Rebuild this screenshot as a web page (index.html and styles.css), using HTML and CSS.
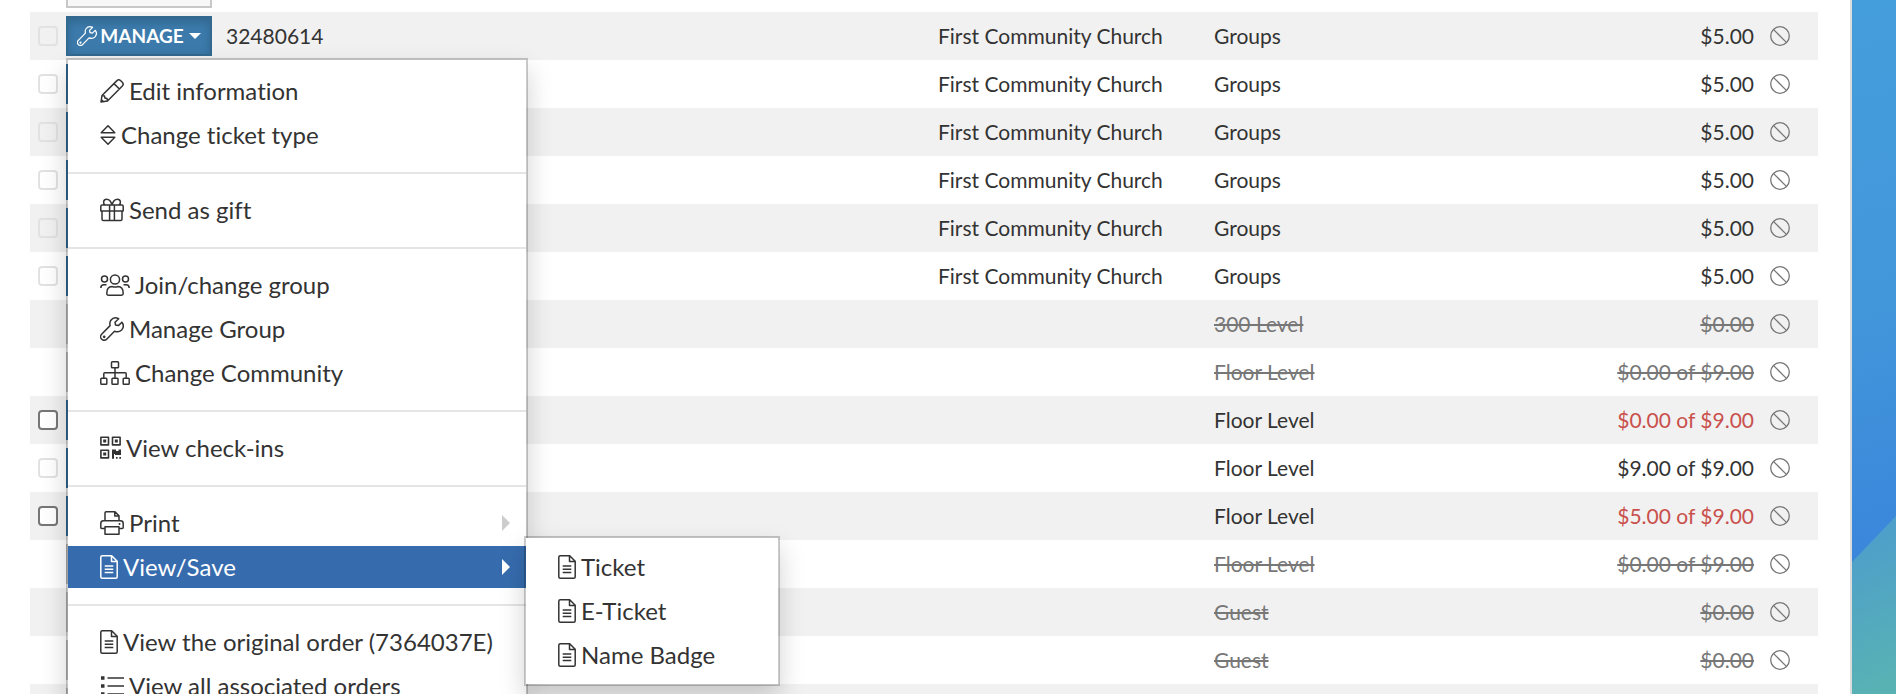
FILE: index.html
```
<!DOCTYPE html>
<html lang="en">
<head>
<meta charset="utf-8">
<title>Tickets</title>
<link rel="stylesheet" href="styles.css">
</head>
<body>
<svg class="sprite" aria-hidden="true">
  <symbol id="i-wrench" viewBox="0 0 24 24"><path d="M21.900 5.200 18.400 8.600 15.600 8 15 5.300 18.700 1.700C15.800.3 12.600 1 10.900 3.300 9.800 4.800 9.600 6.600 10.100 8.600L1.600 17.200C.3 18.600.3 20.900 1.700 22.300 3.100 23.700 5.400 23.600 6.700 22.300L14.500 14.200C17 15.200 19.700 14.900 21.600 13 23.500 11 23.800 7.800 21.900 5.200Z"/><circle cx="4.200" cy="19.800" r=".6"/></symbol>
  <symbol id="i-pencil" viewBox="0 0 24 24"><path d="M1 23 2 16.500 16.700 1.900C17.900.6 19.500.6 20.700 1.700L22.300 3.300C23.400 4.500 23.400 6.100 22.100 7.300L7.500 22ZM14 4.600 19.400 10M2 16.500 4.600 17 4.900 19.100 7 19.400 7.500 22M1.200 20.500 3.500 22.800"/></symbol>
  <symbol id="i-sort" viewBox="0 0 16 24"><path d="M1.200 9.800 8 2.700 14.800 9.800ZM1.200 14.200 8 21.300 14.800 14.200Z"/></symbol>
  <symbol id="i-gift" viewBox="0 0 24 24"><path d="M2.200 7H21.800Q23.200 7 23.200 8.400V13H.8V8.400Q.8 7 2.200 7ZM2 13V21.200Q2 22.600 3.400 22.600H20.600Q22 22.600 22 21.200V13M9.600 7V22.600M14.400 7V22.600M12 7C11 3.500 9 1.300 6.600 1.300 3.200 1.300 2.700 5.500 5 7M12 7C13 3.500 15 1.300 17.400 1.300 20.800 1.300 21.300 5.500 19 7"/></symbol>
  <symbol id="i-users" viewBox="0 0 30 24"><circle cx="15" cy="6.500" r="4.600"/><circle cx="4.500" cy="6" r="3"/><circle cx="25.500" cy="6" r="3"/><path d="M6.800 20.500C6.800 15.500 9 13.500 12 13.500 14 14.300 16 14.300 18 13.500 21 13.500 23.200 15.500 23.200 20.500 23.200 21.600 22.600 22.200 21.500 22.200H8.500C7.400 22.200 6.800 21.600 6.800 20.500ZM.8 15C.8 12.700 2 11.800 4 11.800H6.500M29.200 15C29.200 12.700 28 11.800 26 11.800H23.500"/></symbol>
  <symbol id="i-sitemap" viewBox="0 0 30 24"><rect x="11.500" y=".8" width="7" height="6" rx=".8"/><rect x=".8" y="17.200" width="6" height="6" rx=".8"/><rect x="12" y="17.200" width="6" height="6" rx=".8"/><rect x="23.200" y="17.200" width="6" height="6" rx=".8"/><path d="M15 7V17M3.800 17V12.700Q3.800 11.700 4.800 11.700H25.200Q26.200 11.700 26.200 12.700V17"/></symbol>
  <symbol id="i-qr" viewBox="0 0 21 24"><g stroke-width="1.600"><rect x=".9" y="1.300" width="7.600" height="7.600"/><rect x="12.500" y="1.300" width="7.600" height="7.600"/><rect x=".9" y="14.300" width="7.600" height="7.600"/></g><path class="solid" d="M3.200 3.600H6.200V6.600H3.200ZM14.800 3.600H17.800V6.600H14.800ZM3.200 16.600H6.200V19.600H3.200ZM12 13.500H16V15H18.500V13.500H21V19H15V18H14V22.700H12ZM16 21H17.600V22.700H16ZM19.300 21H21V22.700H19.300Z"/></symbol>
  <symbol id="i-print" viewBox="0 0 24 24"><path d="M5 10V2Q5 .8 6.200 .8H15L19 4.800V10M14.800 1V5H19M5 17.500H1.800Q.8 17.500 .8 16.500V12.500Q.8 9.800 3.500 9.800H20.500Q23.200 9.800 23.200 12.500V16.500Q23.200 17.500 22.200 17.500H19M5 15.800H19V23.200H5Z"/><circle class="solid" cx="19.500" cy="13" r="1"/></symbol>
  <symbol id="i-file" viewBox="0 0 18 24"><path d="M2.300 .8H11.700L17.200 6.300V21.700Q17.200 23.200 15.700 23.200H2.300Q.8 23.200 .8 21.700V2.300Q.8 .8 2.300 .8ZM11.500 1V6.500H17M4.700 11H13.300M4.700 14.300H13.300M4.700 17.600H13.300"/></symbol>
  <symbol id="i-list" viewBox="0 0 24 24"><path d="M7.500 4H24M7.500 12H24M7.500 20H24"/><path class="solid" d="M1 2.300H4.500V5.700H1ZM1 10.300H4.500V13.700H1ZM1 18.300H4.500V21.700H1Z"/></symbol>
  <symbol id="i-ban" viewBox="0 0 20 20"><circle cx="10" cy="10" r="9.300"/><path d="M3.400 3.400 16.600 16.600"/></symbol>
</svg>
<div class="page">
  <main class="panel">
    <table class="tickets">
      <colgroup><col class="c-check"><col class="c-manage"><col class="c-id"><col class="c-group"><col class="c-level"><col class="c-price"><col class="c-ban"></colgroup>
      <tbody>
        <tr><td></td><td><button class="btn btn-light" aria-label="Manage"></button></td><td></td><td></td><td></td><td></td><td></td></tr>
        <tr>
          <td><input type="checkbox" disabled aria-label="Select 32480614"></td>
          <td class="anchor">
            <button class="btn btn-primary open" aria-haspopup="true" aria-expanded="true"><svg class="icon w20"><use href="#i-wrench"/></svg><span>MANAGE</span><span class="caret"></span></button>
            <ul class="menu menu-main">
              <li><a href="#edit"><svg class="icon w24"><use href="#i-pencil"/></svg>Edit information</a></li>
              <li><a href="#type"><svg class="icon w16"><use href="#i-sort"/></svg>Change ticket type</a></li>
              <li class="divider"></li>
              <li><a href="#gift"><svg class="icon w24"><use href="#i-gift"/></svg>Send as gift</a></li>
              <li class="divider"></li>
              <li><a href="#join"><svg class="icon w30"><use href="#i-users"/></svg>Join/change group</a></li>
              <li><a href="#group"><svg class="icon w24"><use href="#i-wrench"/></svg>Manage Group</a></li>
              <li><a href="#community"><svg class="icon w30"><use href="#i-sitemap"/></svg>Change Community</a></li>
              <li class="divider"></li>
              <li><a href="#checkins"><svg class="icon w21"><use href="#i-qr"/></svg>View check-ins</a></li>
              <li class="divider"></li>
              <li><a href="#print" class="parent"><svg class="icon w24"><use href="#i-print"/></svg>Print</a></li>
              <li class="anchor"><a href="#view" class="parent active"><svg class="icon w18"><use href="#i-file"/></svg>View/Save</a>
                <ul class="menu menu-sub">
                  <li><a href="#ticket"><svg class="icon w18"><use href="#i-file"/></svg>Ticket</a></li>
                  <li><a href="#eticket"><svg class="icon w18"><use href="#i-file"/></svg>E-Ticket</a></li>
                  <li><a href="#badge"><svg class="icon w18"><use href="#i-file"/></svg>Name Badge</a></li>
                </ul>
              </li>
              <li class="divider"></li>
              <li><a href="#order"><svg class="icon w18"><use href="#i-file"/></svg>View the original order (7364037E)</a></li>
              <li><a href="#orders"><svg class="icon w24"><use href="#i-list"/></svg>View all associated orders</a></li>
            </ul>
          </td>
          <td>32480614</td><td>First Community Church</td><td>Groups</td><td class="price">$5.00</td><td><svg class="ban"><use href="#i-ban"/></svg></td>
        </tr>
        <tr><td><input type="checkbox" disabled aria-label="Select"></td><td><button class="btn btn-primary" aria-label="Manage"></button></td><td></td><td>First Community Church</td><td>Groups</td><td class="price">$5.00</td><td><svg class="ban"><use href="#i-ban"/></svg></td></tr>
        <tr><td><input type="checkbox" disabled aria-label="Select"></td><td><button class="btn btn-primary" aria-label="Manage"></button></td><td></td><td>First Community Church</td><td>Groups</td><td class="price">$5.00</td><td><svg class="ban"><use href="#i-ban"/></svg></td></tr>
        <tr><td><input type="checkbox" disabled aria-label="Select"></td><td><button class="btn btn-primary" aria-label="Manage"></button></td><td></td><td>First Community Church</td><td>Groups</td><td class="price">$5.00</td><td><svg class="ban"><use href="#i-ban"/></svg></td></tr>
        <tr><td><input type="checkbox" disabled aria-label="Select"></td><td><button class="btn btn-primary" aria-label="Manage"></button></td><td></td><td>First Community Church</td><td>Groups</td><td class="price">$5.00</td><td><svg class="ban"><use href="#i-ban"/></svg></td></tr>
        <tr><td><input type="checkbox" disabled aria-label="Select"></td><td><button class="btn btn-primary" aria-label="Manage"></button></td><td></td><td>First Community Church</td><td>Groups</td><td class="price">$5.00</td><td><svg class="ban"><use href="#i-ban"/></svg></td></tr>
        <tr class="void"><td></td><td><button class="btn btn-light" aria-label="Manage"></button></td><td></td><td></td><td><s>300 Level</s></td><td class="price"><s>$0.00</s></td><td><svg class="ban"><use href="#i-ban"/></svg></td></tr>
        <tr class="void"><td></td><td><button class="btn btn-light" aria-label="Manage"></button></td><td></td><td></td><td><s>Floor Level</s></td><td class="price"><s>$0.00 of $9.00</s></td><td><svg class="ban"><use href="#i-ban"/></svg></td></tr>
        <tr><td><input type="checkbox" aria-label="Select"></td><td><button class="btn btn-primary" aria-label="Manage"></button></td><td></td><td></td><td>Floor Level</td><td class="price due">$0.00 of $9.00</td><td><svg class="ban"><use href="#i-ban"/></svg></td></tr>
        <tr><td><input type="checkbox" disabled aria-label="Select"></td><td><button class="btn btn-primary" aria-label="Manage"></button></td><td></td><td></td><td>Floor Level</td><td class="price">$9.00 of $9.00</td><td><svg class="ban"><use href="#i-ban"/></svg></td></tr>
        <tr><td><input type="checkbox" aria-label="Select"></td><td><button class="btn btn-primary" aria-label="Manage"></button></td><td></td><td></td><td>Floor Level</td><td class="price due">$5.00 of $9.00</td><td><svg class="ban"><use href="#i-ban"/></svg></td></tr>
        <tr class="void"><td></td><td><button class="btn btn-light" aria-label="Manage"></button></td><td></td><td></td><td><s>Floor Level</s></td><td class="price"><s>$0.00 of $9.00</s></td><td><svg class="ban"><use href="#i-ban"/></svg></td></tr>
        <tr class="void"><td></td><td><button class="btn btn-light" aria-label="Manage"></button></td><td></td><td></td><td><s>Guest</s></td><td class="price"><s>$0.00</s></td><td><svg class="ban"><use href="#i-ban"/></svg></td></tr>
        <tr class="void"><td></td><td><button class="btn btn-light" aria-label="Manage"></button></td><td></td><td></td><td><s>Guest</s></td><td class="price"><s>$0.00</s></td><td><svg class="ban"><use href="#i-ban"/></svg></td></tr>
        <tr class="void"><td></td><td><button class="btn btn-light" aria-label="Manage"></button></td><td></td><td></td><td></td><td></td><td></td></tr>
      </tbody>
    </table>
  </main>
  <div class="backdrop"></div>
</div>
</body>
</html>
```
FILE: styles.css
```
* { box-sizing: border-box; }
body {
  margin: 0;
  background: #fff;
  color: #333;
  font: 21px/28px Lato, "Liberation Sans", sans-serif;
  font-variant-ligatures: none;
}
.sprite { position: absolute; width: 0; height: 0; }
.page { display: flex; height: 100vh; overflow: hidden; }
.panel {
  flex: 1;
  min-width: 0;
  padding: 0 32px 0 30px;
  border-right: 2px solid #dcdcdc;
  background: #fff;
}
.backdrop {
  flex: none;
  width: 44px;
  background: linear-gradient(165deg, #459edc 0, #4296da 45%, #3a86dc 80%);
}
.backdrop::after {
  content: "";
  display: block;
  height: 100%;
  background: linear-gradient(155deg, #4e9fca 76%, #58b2b4 98%);
  clip-path: polygon(0 562px, 100% 516px, 100% 100%, 0 100%);
}

.tickets {
  width: 100%;
  margin-top: -36px;
  border-collapse: collapse;
  table-layout: fixed;
}
.tickets tr { height: 48px; }
.tickets tr:nth-child(even) { background: #f1f1f1; }
.tickets td { padding: 0; white-space: nowrap; vertical-align: middle; }
.c-check { width: 36px; }
.c-manage { width: 160px; }
.c-group { width: 276px; }
.c-level { width: 300px; }
.c-price { width: 240px; }
.c-ban { width: 64px; }
.void { color: #777; }
.void s { text-decoration-thickness: 2px; }
.tickets .price { text-align: right; }
.due { color: #c9504c; }
.anchor { position: relative; }

input[type="checkbox"] {
  appearance: none;
  display: block;
  width: 20px;
  height: 20px;
  margin: 0 0 0 8px;
  border: 2px solid #767676;
  border-radius: 4px;
  background: #fff;
}
input[type="checkbox"]:disabled { border-color: #e2e2e2; background: transparent; }

.btn {
  display: flex;
  align-items: center;
  justify-content: center;
  width: 146px;
  height: 40px;
  padding: 0;
  border: 2px solid #c8c8c8;
  background: #f7f7f7;
  font: 700 19px/28px Lato, "Liberation Sans", sans-serif;
}
.btn-primary {
  border-color: #3872a0;
  background: #3b7aab;
  color: #fff;
}
.open {
  border-color: #33698f;
  box-shadow: inset 0 4px 8px rgba(0, 0, 0, .16);
}
.caret {
  margin-left: 5px;
  border: 6px solid transparent;
  border-top-color: #fff;
  border-bottom: 0;
}

.icon {
  flex: none;
  height: 24px;
  margin-right: 5px;
  fill: none;
  stroke: currentColor;
  stroke-width: 1.5;
  stroke-linejoin: round;
}
.btn .icon { margin-right: 3px; }
.solid { fill: currentColor; stroke: none; }
.w16 { width: 16px; }
.w18 { width: 18px; }
.btn .w20 { width: 20px; height: 20px; }
.w21 { width: 21px; }
.w24 { width: 24px; }
.w30 { width: 30px; }
.ban {
  display: block;
  width: 20px;
  height: 20px;
  margin-left: 16px;
  fill: none;
  stroke: #777;
  stroke-width: 1.3;
}

.menu {
  position: absolute;
  z-index: 1;
  margin: 0;
  list-style: none;
  border: 2px solid rgba(0, 0, 0, .2);
  background: #fff;
  background-clip: padding-box;
  box-shadow: 0 12px 24px rgba(0, 0, 0, .175);
  font-size: 24px;
}
.menu-main { top: 46px; left: 0; width: 462px; padding: 10px 0; }
.menu-sub { top: -10px; left: 100%; width: 256px; margin-left: -2px; padding: 8px 0; }
.menu li + li { margin-top: 2px; }
.menu a {
  display: flex;
  align-items: center;
  height: 42px;
  padding: 0 32px;
  color: #333;
  text-decoration: none;
}
.menu li.divider { height: 2px; margin: 16px 0 15px; background: #e5e5e5; }
.menu .divider + li { margin-top: 0; }
.menu .active { background: #366cae; color: #fff; }
.parent::after {
  content: "";
  margin: 0 -16px 0 auto;
  border: 8px solid transparent;
  border-left-color: #ccc;
  border-right: 0;
}
.menu .active::after { border-left-color: #fff; }
```
